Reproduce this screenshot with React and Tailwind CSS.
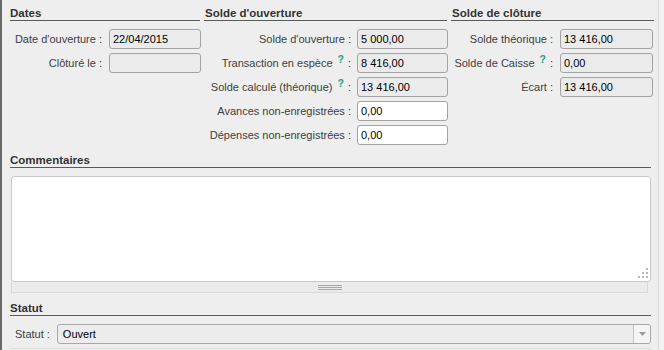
import React from 'react';

const Heading = ({ children, className = '' }) => (
  <div
    className={`border-b border-[#5a5a5a] text-[11.5px] font-bold leading-[14px] text-[#333] ${className}`}
  >
    {children}
  </div>
);

const Hint = () => (
  <span className="relative -top-[4px] ml-[5px] text-[10.5px] font-bold text-[#2a9a7a]">?</span>
);

const Field = ({ label, hint, value, labelWidth, inputWidth, gap, editable }) => (
  <div className={`flex h-[20px] items-center ${gap}`}>
    <div className={`${labelWidth} shrink-0 whitespace-nowrap text-right text-[#404040]`}>
      {label}
      {hint ? (
        <>
          <Hint />
          <span className="ml-[4px]">:</span>
        </>
      ) : (
        ' :'
      )}
    </div>
    <div
      className={`${inputWidth} h-[20px] shrink-0 rounded-[3px] border border-[#a3a3a3] px-[3px] leading-[18px] text-black ${
        editable ? 'bg-white' : 'bg-[#ebebeb]'
      }`}
    >
      {value}
    </div>
  </div>
);

export default function App() {
  const col1 = { labelWidth: 'w-[92px]', inputWidth: 'w-[92px]', gap: 'gap-[7px]' };
  const col2 = { labelWidth: 'w-[147px]', inputWidth: 'w-[91px]', gap: 'gap-[6px]' };
  const col3 = { labelWidth: 'w-[102px]', inputWidth: 'w-[93px]', gap: 'gap-[7px]' };

  return (
    <div className="flex h-[350px] w-[664px] overflow-hidden bg-[#efeeee] font-['Liberation_Sans',Arial,sans-serif] text-[11px]">
      <div className="w-[2px] shrink-0 bg-[#6a6a6a]" />
      <div className="w-[656px] shrink-0 pl-[8px]">
        {/* Top sections */}
        <div className="flex">
          <div className="w-[194px] shrink-0">
            <Heading className="w-[190px] pt-[6px]">Dates</Heading>
            <div className="mt-[8px] flex flex-col gap-[4px]">
              <Field {...col1} label="Date d'ouverture" value="22/04/2015" />
              <Field {...col1} label="Clôturé le" value="" />
            </div>
          </div>

          <div className="w-[247px] shrink-0">
            <Heading className="w-[243px] pt-[6px] pl-[1px]">Solde d'ouverture</Heading>
            <div className="mt-[8px] flex flex-col gap-[4px]">
              <Field {...col2} label="Solde d'ouverture" value="5 000,00" />
              <Field {...col2} label="Transaction en espèce" hint value="8 416,00" />
              <Field {...col2} label="Solde calculé (théorique)" hint value="13 416,00" />
              <Field {...col2} label="Avances non-enregistrées" value="0,00" editable />
              <Field {...col2} label="Dépenses non-enregistrées" value="0,00" editable />
            </div>
          </div>

          <div className="w-[205px] shrink-0">
            <Heading className="w-[203px] pt-[6px] pl-[1px]">Solde de clôture</Heading>
            <div className="mt-[8px] flex flex-col gap-[4px]">
              <Field {...col3} label="Solde théorique" value="13 416,00" />
              <Field {...col3} label="Solde de Caisse" hint value="0,00" />
              <Field {...col3} label="Écart" value="13 416,00" />
            </div>
          </div>
        </div>

        {/* Commentaires */}
        <div className="w-[641px]">
          <Heading className="mt-[8px]">Commentaires</Heading>
          <div className="relative ml-[1px] mt-[8px] h-[106px] rounded-[3px] border border-[#c9c9c9] bg-white">
            <svg
              className="absolute bottom-[1px] right-[1px]"
              width="13"
              height="13"
              viewBox="0 0 13 13"
            >
              <g fill="#b8b8b8">
                <rect x="10" y="1" width="2" height="2" />
                <rect x="6" y="5" width="2" height="2" />
                <rect x="10" y="5" width="2" height="2" />
                <rect x="2" y="9" width="2" height="2" />
                <rect x="6" y="9" width="2" height="2" />
                <rect x="10" y="9" width="2" height="2" />
              </g>
            </svg>
          </div>
          <div className="ml-[1px] flex h-[11px] w-[637px] items-center justify-center border border-t-0 border-[#d9d9d9] bg-[#ebebeb]">
            <div className="flex w-[24px] flex-col gap-[1px]">
              <div className="h-px bg-[#a8a8a8]" />
              <div className="h-px bg-[#a8a8a8]" />
              <div className="h-px bg-[#a8a8a8]" />
            </div>
          </div>
        </div>

        {/* Statut */}
        <div className="w-[641px]">
          <Heading className="mt-[8px]">Statut</Heading>
          <div className="mt-[8px] flex h-[20px] items-center gap-[7px] pl-[5px]">
            <div className="shrink-0 whitespace-nowrap text-[#404040]">Statut :</div>
            <div className="flex h-[20px] flex-1 items-stretch rounded-[3px] border border-[#a8a8a8] bg-[#ececec]">
              <div className="flex-1 pl-[5px] leading-[18px] text-black">Ouvert</div>
              <div className="flex w-[17px] items-center justify-center rounded-r-[3px] border-l border-[#c4c4c4] bg-[#f4f4f4]">
                <svg width="7" height="4" viewBox="0 0 7 4">
                  <path d="M0 0 L7 0 L3.5 4 Z" fill="#9c9c9c" />
                </svg>
              </div>
            </div>
          </div>
          <div className="mt-[4px] h-px bg-[#dcdcdc]" />
        </div>
      </div>
      <div className="w-px shrink-0 bg-[#d9d9d9]" />
      <div className="flex-1 bg-[#f4f3f3]" />
    </div>
  );
}
